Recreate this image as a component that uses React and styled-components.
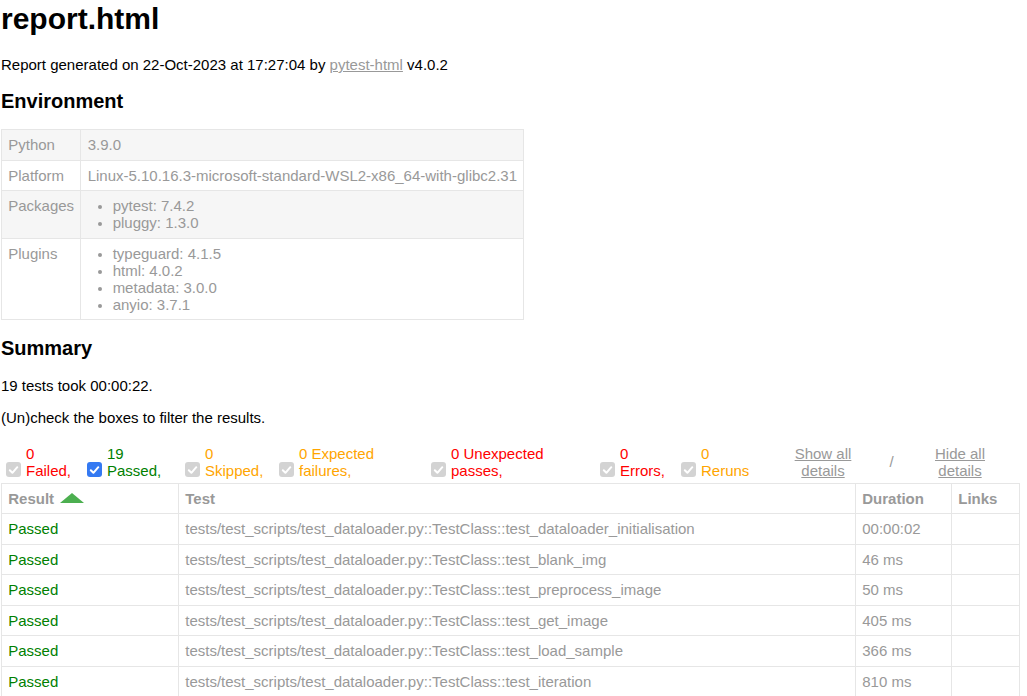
import React from 'react';
import styled, { createGlobalStyle } from 'styled-components';

const Global = createGlobalStyle`
  html { overflow: hidden; }
  body {
    margin: 0;
    padding: 0 7px 0 1px;
    font-family: "Liberation Sans", Arial, Helvetica, sans-serif;
    font-size: 15px;
    color: #999;
    background: #fff;
  }
`;

const Title = styled.h1`
  font-size: 30px;
  font-weight: bold;
  color: #000;
  margin: 2px 0 20px;
`;

const Heading = styled.h2`
  font-size: 20px;
  font-weight: bold;
  color: #000;
  margin: ${p => p.$top || '16.6px'} 0 16.6px;
`;

const Para = styled.p`
  color: #000;
  margin: 15px 0;
`;

const Link = styled.a`
  color: #999;
  text-decoration: underline;
`;

const EnvTable = styled.table`
  border-collapse: collapse;
`;

const EnvRow = styled.tr`
  &:nth-child(odd) {
    background: #f6f6f6;
  }
`;

const EnvCell = styled.td`
  padding: 6.25px;
  border: 1px solid #e6e6e6;
  vertical-align: top;
`;

const PkgList = styled.ul`
  margin: 0;
  padding: 0 25px;
  li::marker {
    font-size: 13px;
  }
`;

const Controls = styled.div`
  display: flex;
  align-items: center;
  justify-content: space-between;
`;

const Filters = styled.div`
  display: flex;
  align-items: flex-end;
`;

const FilterItem = styled.div`
  display: flex;
  align-items: flex-end;
  width: ${p => p.$w}px;
`;

const Box = styled.span`
  flex: 0 0 15px;
  width: 15px;
  height: 15px;
  margin: 0 5px 2px 5px;
  border-radius: 3px;
  background: ${p => (p.$on ? '#3479f2' : '#d3d3d3')};
  display: flex;
  align-items: center;
  justify-content: center;
`;

const Label = styled.span`
  white-space: pre-line;
  line-height: 17.25px;
  color: ${p => p.$color};
`;

const Collapse = styled.div`
  display: flex;
  align-items: center;
  margin-right: 15px;
`;

const ToggleButton = styled.button`
  width: 90px;
  background: none;
  border: none;
  padding: 3.75px 7.5px;
  font: inherit;
  line-height: 17.25px;
  color: #999;
  text-decoration: underline;
  text-align: center;
  white-space: pre-line;
  cursor: pointer;
`;

const Slash = styled.span`
  width: 47px;
  text-align: center;
  color: #999;
`;

const ResultsTable = styled.table`
  border-collapse: collapse;
  border: 1px solid #e6e6e6;
  width: 100%;
  table-layout: fixed;
  color: #999;
  font-size: 15px;
`;

const Th = styled.th`
  padding: 6px 6.25px;
  border: 1px solid #e6e6e6;
  text-align: left;
  font-weight: bold;
  line-height: 17.25px;
  white-space: nowrap;
`;

const Td = styled.td`
  padding: 6px 6.25px;
  border: 1px solid #e6e6e6;
  text-align: left;
  line-height: 17.5px;
  white-space: nowrap;
  color: ${p => p.$color || '#999'};
`;

const SortArrow = styled.svg`
  margin-left: 6px;
  vertical-align: 1px;
`;

const Check = () => (
  <svg width="11" height="10" viewBox="0 0 11 10">
    <polyline points="1.8,5.2 4.4,7.8 9.3,2.2" fill="none" stroke="#fff" strokeWidth="2" strokeLinecap="round" strokeLinejoin="round" />
  </svg>
);

const env = [
  ['Python', '3.9.0'],
  ['Platform', 'Linux-5.10.16.3-microsoft-standard-WSL2-x86_64-with-glibc2.31'],
  ['Packages', ['pytest: 7.4.2', 'pluggy: 1.3.0']],
  ['Plugins', ['typeguard: 4.1.5', 'html: 4.0.2', 'metadata: 3.0.0', 'anyio: 3.7.1']],
];

const filters = [
  { w: 81, text: '0\nFailed,', color: '#ff0000' },
  { w: 98, text: '19\nPassed,', color: '#008000', on: true },
  { w: 94, text: '0\nSkipped,', color: '#ffa500' },
  { w: 152, text: '0 Expected\nfailures,', color: '#ffa500' },
  { w: 169, text: '0 Unexpected\npasses,', color: '#ff0000' },
  { w: 81, text: '0\nErrors,', color: '#ff0000' },
  { w: 90, text: '0\nReruns', color: '#ffa500' },
];

const prefix = 'tests/test_scripts/test_dataloader.py::TestClass::';
const results = [
  ['test_dataloader_initialisation', '00:00:02'],
  ['test_blank_img', '46 ms'],
  ['test_preprocess_image', '50 ms'],
  ['test_get_image', '405 ms'],
  ['test_load_sample', '366 ms'],
  ['test_iteration', '810 ms'],
];

export default function App() {
  return (
    <>
      <Global />
      <Title>report.html</Title>
      <Para>
        Report generated on 22-Oct-2023 at 17:27:04 by <Link href="#">pytest-html</Link> v4.0.2
      </Para>
      <Heading>Environment</Heading>
      <EnvTable>
        <tbody>
          {env.map(([k, v]) => (
            <EnvRow key={k}>
              <EnvCell>{k}</EnvCell>
              <EnvCell>
                {Array.isArray(v) ? (
                  <PkgList>
                    {v.map(i => (
                      <li key={i}>{i}</li>
                    ))}
                  </PkgList>
                ) : (
                  v
                )}
              </EnvCell>
            </EnvRow>
          ))}
        </tbody>
      </EnvTable>
      <Heading $top="17.2px">Summary</Heading>
      <Para>19 tests took 00:00:22.</Para>
      <Para>(Un)check the boxes to filter the results.</Para>
      <Controls>
        <Filters>
          {filters.map(f => (
            <FilterItem key={f.text} $w={f.w}>
              <Box $on={f.on}>
                <Check />
              </Box>
              <Label $color={f.color}>{f.text}</Label>
            </FilterItem>
          ))}
        </Filters>
        <Collapse>
          <ToggleButton>{'Show all\ndetails'}</ToggleButton>
          <Slash>/</Slash>
          <ToggleButton>{'Hide all\ndetails'}</ToggleButton>
        </Collapse>
      </Controls>
      <ResultsTable>
        <colgroup>
          <col style={{ width: 177 }} />
          <col style={{ width: 677 }} />
          <col style={{ width: 96 }} />
          <col />
        </colgroup>
        <thead>
          <tr>
            <Th>
              Result
              <SortArrow width="24" height="10" viewBox="0 0 24 10">
                <polygon points="0,10 12,0 24,10" fill="#4caf50" />
              </SortArrow>
            </Th>
            <Th>Test</Th>
            <Th>Duration</Th>
            <Th>Links</Th>
          </tr>
        </thead>
        <tbody>
          {results.map(([name, dur]) => (
            <tr key={name}>
              <Td $color="#008000">Passed</Td>
              <Td>{prefix + name}</Td>
              <Td>{dur}</Td>
              <Td />
            </tr>
          ))}
        </tbody>
      </ResultsTable>
    </>
  );
}
